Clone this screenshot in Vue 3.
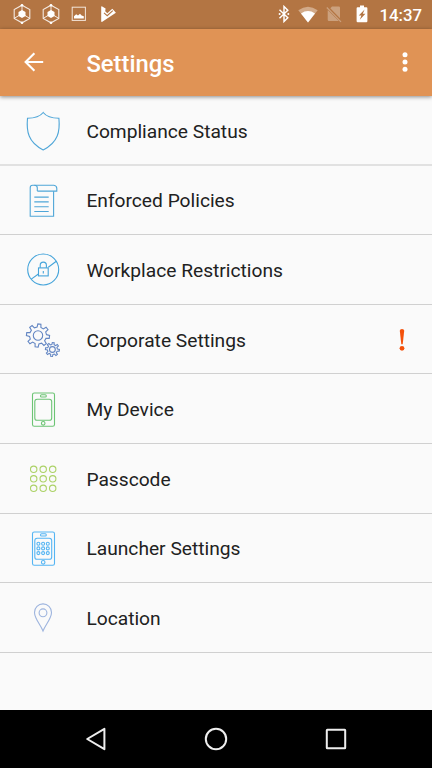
<script setup>
const rows = [
  { id: 'shield', label: 'Compliance Status', color: '#4fa6d8' },
  { id: 'policy', label: 'Enforced Policies', color: '#4fa6d8' },
  { id: 'lock', label: 'Workplace Restrictions', color: '#45a4da' },
  { id: 'gears', label: 'Corporate Settings', color: '#6386c3', alert: true },
  { id: 'device', label: 'My Device', color: '#6cc474' },
  { id: 'passcode', label: 'Passcode', color: '#acd267' },
  { id: 'launcher', label: 'Launcher Settings', color: '#55b5f3' },
  { id: 'location', label: 'Location', color: '#9db4de' },
]

function gear(cx, cy, outer, inner, teeth, phase) {
  const points = []
  const step = (Math.PI * 2) / teeth
  for (let i = 0; i < teeth; i++) {
    const a = i * step + phase
    for (const [offset, r] of [[-0.29, inner], [-0.17, outer], [0.17, outer], [0.29, inner]]) {
      const t = a + offset * step
      points.push(`${(cx + r * Math.cos(t)).toFixed(2)} ${(cy + r * Math.sin(t)).toFixed(2)}`)
    }
  }
  return `M${points.join('L')}Z`
}
const bigGear = gear(22, 30.5, 11.6, 8.5, 8, 0.12)
const smallGear = gear(36.4, 44.5, 7, 5, 8, 0.12)

const passDots = [25.3, 34.8, 44.3].flatMap((y) => [17.7, 27.2, 36.7].map((x) => ({ x, y })))
const appDots = [29.7, 34.4, 39.1].flatMap((y) => [22.4, 27.1, 31.8].map((x) => ({ x, y })))
</script>

<template>
  <div class="screen">
    <div class="status">
      <div class="notifications">
        <svg v-for="n in 2" :key="n" class="hex" viewBox="0 0 20 22">
          <path d="M10 2.2 17.8 6.6V15.4L10 19.8 2.2 15.4V6.6Z" fill="none" stroke="#fff" stroke-width="1.1" opacity=".85" />
          <path d="M10 2V8M2.2 15.4 7 12.5M17.8 15.4 13 12.5" stroke="#fff" stroke-width="1" opacity=".85" />
          <path d="M10 7 13.5 9V13L10 15 6.5 13V9Z" fill="#fff" />
          <circle cx="10" cy="2.2" r="1.3" fill="#fff" /><circle cx="10" cy="19.8" r="1.3" fill="#fff" />
        </svg>
        <svg class="photo" viewBox="0 0 16 16">
          <rect x="1.2" y="1.2" width="13.2" height="13.2" fill="none" stroke="#f3e6db" stroke-width="1" />
          <path d="M3 12.4V10.3L5.2 8.2 7 9.5 9 7.8 10.6 9.5 12.8 10.2V12.4Z" fill="#fff" />
        </svg>
        <svg class="play" viewBox="0 0 16 18">
          <path d="M1.2 2Q1.2 .9 2.2 1.5L5.6 3.6 5.2 6.2 7.3 8.3 12.3 3.8 15.9 7.8 2.3 16.8Q1.2 17.2 1.2 16Z" fill="#fff" />
          <path d="M4 7.8 7.2 10.7 12.8 5.6" fill="none" stroke="#b37543" stroke-width="1.1" />
        </svg>
      </div>
      <div class="system">
        <svg class="bluetooth" viewBox="0 0 12 18">
          <path d="M1.5 4.7 9.8 12.8 6 16.5V1.5L9.8 5.2 1.5 13.3" fill="none" stroke="#fff" stroke-width="1.45" />
          <circle cx="1.6" cy="9" r="1" fill="#fff" /><circle cx="10.3" cy="9" r="1" fill="#fff" />
        </svg>
        <svg class="wifi" viewBox="0 0 20 17">
          <path d="M10 16.5.3 4.2Q10-2.8 19.7 4.2Z" fill="#d2aa89" />
          <path d="M10 16.5 3 7.4Q10 2.5 17 7.4Z" fill="#fff" />
        </svg>
        <svg class="sim" viewBox="0 0 16 18">
          <path d="M6 1.5H12.8Q14 1.5 14 2.7V13.3L4.3 3.3ZM2 5.2 12.8 16H3Q1.7 16 1.7 14.8V5.6Z" fill="#cba17e" />
          <path d="M.8 2.5 15 16.8" stroke="#cba17e" stroke-width="1.2" />
        </svg>
        <svg class="battery" viewBox="0 0 12 18">
          <path d="M4 .5H8V2.3H10.4Q11.4 2.3 11.4 3.4V16Q11.4 17.2 10.3 17.2H1.7Q.6 17.2.6 16V3.4Q.6 2.3 1.6 2.3H4Z" fill="#fff" />
          <path d="M8.6 4.5 2.8 10.4H5.4L3.8 14.8 9.4 8.8H6.8Z" fill="#b37543" />
        </svg>
        <span class="clock">14:37</span>
      </div>
    </div>

    <header class="bar">
      <svg class="back" viewBox="0 0 20 20">
        <path d="M19.2 10H2M10.4 1.2 1.6 10 10.4 18.8" fill="none" stroke="#fff" stroke-width="2.1" />
      </svg>
      <h1 class="title">Settings</h1>
      <svg class="more" viewBox="0 0 8 22">
        <circle cx="4" cy="3.8" r="2.5" /><circle cx="4" cy="11" r="2.5" /><circle cx="4" cy="18.2" r="2.5" />
      </svg>
    </header>

    <main class="list">
      <div v-for="row in rows" :key="row.id" class="row">
        <svg class="icon" viewBox="0 0 56 68" :stroke="row.color">
          <path v-if="row.id === 'shield'" d="M27.2 16.5C24.5 20 18 22.2 11.5 22.2C10.3 35 12 46.5 27.2 53.9C42.4 46.5 44.1 35 42.9 22.2C36.4 22.2 29.9 20 27.2 16.5Z" />
          <g v-else-if="row.id === 'policy'">
            <path d="M21.3 25V21.7Q21.3 19.2 18.4 19.2H16.5Q14.2 19.2 14.2 21.7V50.2H37.6V25.2" />
            <path d="M18.4 19.2H37.8Q40.8 19.6 40.8 22.5V25.1H21.3" />
            <path d="M18.3 31.1H32.7M18.3 35.9H32.7M18.3 40.7H32.7M18.3 45.5H32.7" />
          </g>
          <g v-else-if="row.id === 'lock'">
            <circle cx="27.2" cy="34.5" r="15.5" />
            <path d="M15.3 44.1 22.4 39M32.3 32.2 40.3 26.3" />
            <rect x="22.5" y="32.9" width="9.7" height="8" />
            <path d="M24.2 32.8V30.2A3.1 3.1 0 0 1 30.4 30.2V32.8M27.3 36V38.4" />
          </g>
          <g v-else-if="row.id === 'gears'">
            <path :d="bigGear" /><circle cx="22" cy="30.5" r="4.7" />
            <path :d="smallGear" /><circle cx="36.4" cy="44.5" r="2.9" />
          </g>
          <g v-else-if="row.id === 'device' || row.id === 'launcher'">
            <rect x="16.5" y="18" width="22" height="33.2" rx="1.8" />
            <rect x="18.8" y="24.2" width="16.9" height="21.1" rx="2.4" />
            <rect x="24.5" y="19.8" width="5.8" height="2.2" rx="1.1" />
            <circle cx="27.2" cy="48.3" r="1.8" />
            <template v-if="row.id === 'launcher'">
              <circle v-for="(dot, i) in appDots" :key="i" :cx="dot.x" :cy="dot.y" r="1.5" />
            </template>
          </g>
          <g v-else-if="row.id === 'passcode'">
            <circle v-for="(dot, i) in passDots" :key="i" :cx="dot.x" :cy="dot.y" r="3.2" />
          </g>
          <g v-else>
            <path d="M27 48C25 42.5 18.5 35.5 18.5 29.4A8.5 8.5 0 0 1 35.5 29.4C35.5 35.5 29 42.5 27 48Z" />
            <circle cx="27" cy="29.8" r="3.9" />
          </g>
        </svg>
        <span class="label">{{ row.label }}</span>
        <svg v-if="row.alert" class="alert" viewBox="0 0 8 24">
          <path d="M1.8 2.8Q1.8 1 4 1T6.2 2.8L4.7 16.3H3.3Z" /><circle cx="4" cy="20.3" r="2.4" />
        </svg>
      </div>
    </main>

    <nav class="nav">
      <svg viewBox="0 0 24 24"><path d="M20.4 1.8V22.2L3.2 12Z" /></svg>
      <svg viewBox="0 0 24 24"><circle cx="12" cy="12" r="10.2" /></svg>
      <svg viewBox="0 0 24 24"><rect x="2.8" y="2.8" width="18.4" height="18.4" rx=".5" /></svg>
    </nav>
  </div>
</template>

<style>
body {
  background: #fafafa;
}
</style>

<style scoped>
.screen {
  display: flex;
  flex-direction: column;
  width: 432px;
  height: 768px;
  overflow: hidden;
  background: #fafafa;
  font-family: Roboto, sans-serif;
}
svg {
  display: block;
  flex: none;
}
.status {
  display: flex;
  justify-content: space-between;
  flex: none;
  height: 28.8px;
  box-sizing: border-box;
  padding: 0 10px 0 12px;
  background: #b37543;
}
.notifications,
.system {
  display: flex;
  align-items: center;
}
.hex {
  width: 20px;
  height: 22px;
  margin-right: 9px;
}
.photo {
  width: 16px;
  height: 16px;
  margin: 0 13px 0 1px;
}
.play {
  width: 16px;
  height: 18px;
}
.bluetooth {
  width: 12px;
  height: 18px;
  margin-right: 8px;
}
.wifi {
  width: 20px;
  height: 17px;
  margin-right: 8px;
}
.sim {
  width: 16px;
  height: 18px;
  margin-right: 14px;
}
.battery {
  width: 12px;
  height: 18px;
  margin-right: 11.5px;
}
.clock {
  color: #fff;
  font-size: 16.8px;
  font-weight: 500;
  line-height: 28px;
  padding-top: 1px;
}
.bar {
  display: flex;
  align-items: center;
  flex: none;
  height: 67.2px;
  box-sizing: border-box;
  padding: 0 22.6px 0 24px;
  background: #e09355;
  box-shadow: 0 1px 4px rgba(0, 0, 0, 0.45);
  z-index: 1;
}
.back {
  width: 20px;
  height: 20px;
}
.title {
  flex: 1;
  margin: 4px 0 0 42.4px;
  color: #fff;
  font-size: 23.8px;
  font-weight: 500;
  line-height: 32px;
}
.more {
  width: 8px;
  height: 22px;
  fill: #fff;
}
.list {
  flex: 1;
}
.row {
  display: flex;
  align-items: center;
  height: 69.6px;
  box-sizing: border-box;
  padding: 0 26px 0 16px;
  border-bottom: 1px solid #d0d0d0;
}
.row:first-child {
  border-bottom: 2px solid #e1e1e1;
}
.icon {
  width: 56px;
  height: 68px;
  fill: none;
  stroke-width: 1.1;
}
.label {
  flex: 1;
  padding: 3.2px 0 0 14.4px;
  color: #212121;
  font-size: 19.2px;
  line-height: 24px;
}
.row:first-child .label {
  padding-top: 4px;
}
.alert {
  width: 8px;
  height: 24px;
  margin-top: 2px;
  fill: #f4510b;
}
.nav {
  display: flex;
  align-items: center;
  justify-content: center;
  gap: 96px;
  flex: none;
  height: 57.6px;
  background: #000;
}
.nav svg {
  width: 24px;
  height: 24px;
  fill: none;
  stroke: #eee;
  stroke-width: 2;
  stroke-linejoin: round;
}
</style>
